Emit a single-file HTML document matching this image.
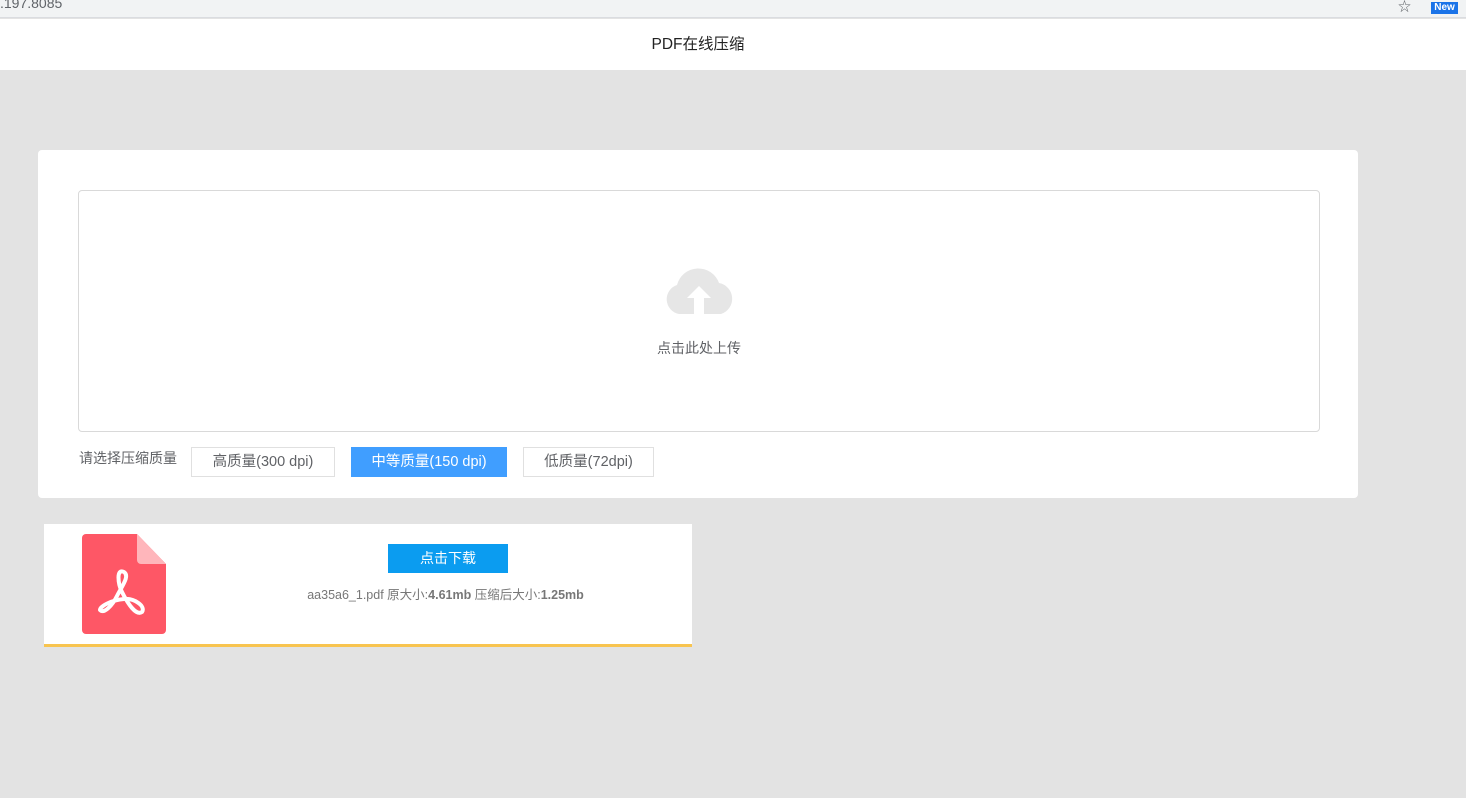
<!DOCTYPE html>
<html><head><meta charset="utf-8"><style>
*{margin:0;padding:0;box-sizing:border-box}
body{width:1466px;height:798px;background:#e3e3e3;font-family:"Liberation Sans","Noto Sans CJK SC",sans-serif;position:relative;overflow:hidden}
.abs{position:absolute}
.bar{left:0;top:0;width:1466px;height:18px;background:#f1f3f4;border-bottom:1px solid #dadce0}
.url{left:0;top:-5px;font-size:14px;color:#5f6368}
.head{left:0;top:19px;width:1466px;height:51px;background:#fff}
.btn{height:30px;line-height:29px;font-size:14.5px;text-align:center;border:1px solid #e0e0e0;color:#606266;background:#fff}
.res{left:44px;top:524px;width:648px;height:123px;background:#fff;border-bottom:3px solid #f8c44f}
</style></head><body>
<div class="abs bar"></div>
<div class="abs url">.197.8085</div>
<div class="abs" style="left:1398px;top:-4px;font-size:13px;color:#5f6368">☆</div>
<div class="abs" style="left:1431px;top:2px;width:27px;height:12px;background:#1a73e8;color:#fff;font-size:10px;line-height:12px;text-align:center;font-weight:bold">New</div>
<div class="abs head"></div>
<div class="abs" style="left:598px;top:19px;width:200px;text-align:center;line-height:51px;font-size:15.5px;color:#222">PDF在线压缩</div>
<div class="abs" style="left:38px;top:150px;width:1320px;height:348px;background:#fff;border-radius:4px"></div>
<div class="abs" style="left:78px;top:190px;width:1242px;height:242px;border:1px solid #d9d9d9;border-radius:4px;background:#fff"></div>
<svg class="abs" style="left:663px;top:267px" width="72" height="48" viewBox="0 0 72 48">
<path d="M16 47 A15 15 0 0 1 14 18 A22 22 0 0 1 56 16 A16 16 0 0 1 58 47 Z" fill="#e6e6e6"/>
<path d="M36 19 L24 31 L31 31 L31 47 L41 47 L41 31 L48 31 Z" fill="#fff"/>
</svg>
<div class="abs" style="left:78px;top:338px;width:1242px;text-align:center;font-size:14px;color:#606266">点击此处上传</div>
<div class="abs" style="left:79px;top:448px;font-size:14px;color:#606266">请选择压缩质量</div>
<div class="abs btn" style="left:191px;top:447px;width:144px">高质量(300 dpi)</div>
<div class="abs btn" style="left:351px;top:447px;width:156px;background:#409eff;border-color:#409eff;color:#fff">中等质量(150 dpi)</div>
<div class="abs btn" style="left:523px;top:447px;width:131px">低质量(72dpi)</div>
<div class="abs res"></div>
<svg class="abs" style="left:82px;top:534px" width="84" height="100" viewBox="0 0 84 100">
<path d="M4 0 H55 L84 30 V96 a4 4 0 0 1 -4 4 H4 a4 4 0 0 1 -4 -4 V4 a4 4 0 0 1 4 -4Z" fill="#fe5766"/>
<path d="M55 0 L84 30 H59 a4 4 0 0 1 -4 -4Z" fill="#ffb6bb"/>
<path d="M42 38 C34 34 36 50 40 58 C46 70 54 82 60 78 C64 72 52 64 42 65 C30 66 18 72 18 76 C22 80 30 72 35 62 C40 52 48 42 42 38Z" fill="none" stroke="#fff" stroke-width="4" stroke-linejoin="round"/>
</svg>
<div class="abs" style="left:388px;top:544px;width:120px;height:29px;background:#0b9cf0;color:#fff;font-size:14px;line-height:29px;text-align:center">点击下载</div>
<div class="abs" style="left:44px;top:584px;width:803px;text-align:center;font-size:12.5px;color:#777">aa35a6_1.pdf 原大小:<b>4.61mb</b> 压缩后大小:<b>1.25mb</b></div>
</body></html>
